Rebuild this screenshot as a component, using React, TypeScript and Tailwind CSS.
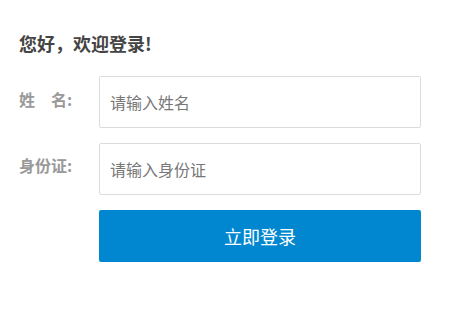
const font = { fontFamily: '"Microsoft YaHei", "Noto Sans CJK SC", sans-serif' };

export default function App() {
  return (
    <div className="min-h-[312px] w-[450px] bg-white pl-[19px] pt-[31px]" style={font}>
      <h1 className="text-[18px] font-bold leading-[24px] text-[#444]">您好，欢迎登录!</h1>
      <div className="mt-[21px] flex flex-col gap-[15px]">
        <div className="flex items-start">
          <label className="w-[80px] pt-[13px] text-[16px] font-bold leading-[20px] text-[#999]">
            姓<span className="inline-block w-[16px]" />名:
          </label>
          <input
            className="h-[52px] w-[322px] rounded-[2px] border border-[#dcdcdc] px-[10px] text-[16px] text-[#333] outline-none placeholder:text-[#777]"
            placeholder="请输入姓名"
          />
        </div>
        <div className="flex items-start">
          <label className="w-[80px] pt-[12px] text-[16px] font-bold leading-[20px] text-[#999]">身份证:</label>
          <input
            className="h-[52px] w-[322px] rounded-[2px] border border-[#dcdcdc] px-[10px] text-[16px] text-[#333] outline-none placeholder:text-[#777]"
            placeholder="请输入身份证"
          />
        </div>
        <div className="flex">
          <div className="w-[80px]" />
          <button className="h-[52px] w-[322px] rounded-[2px] bg-[#0087d0] text-[18px] text-white">立即登录</button>
        </div>
      </div>
    </div>
  );
}
